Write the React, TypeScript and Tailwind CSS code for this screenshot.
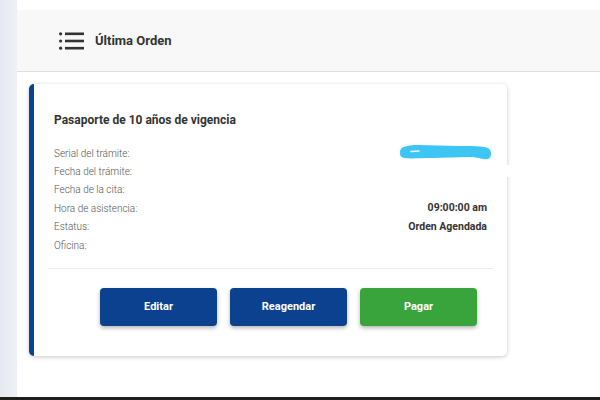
export default function App() {
  const rows = [
    { label: "Serial del trámite:", value: "" },
    { label: "Fecha del trámite:", value: "" },
    { label: "Fecha de la cita:", value: "" },
    { label: "Hora de asistencia:", value: "09:00:00 am" },
    { label: "Estatus:", value: "Orden Agendada" },
    { label: "Oficina:", value: "" },
  ];

  return (
    <div
      className="relative flex h-[400px] w-[600px] overflow-hidden bg-white"
      style={{ fontFamily: "Roboto, 'Liberation Sans', sans-serif" }}
    >
      {/* left strip */}
      <div className="w-[17px] shrink-0 bg-gradient-to-r from-[#e6e9f1] to-[#eef0f5]" />

      <div className="flex flex-1 flex-col">
        <div className="h-[10px] bg-white" />

        {/* Header */}
        <div className="flex h-[62px] items-center border-b border-[#dedede] bg-[#f8f8f8] pl-[42px]">
          <svg width="25" height="18" viewBox="0 0 25 18" className="text-[#333]">
            <circle cx="1.6" cy="1.8" r="1.6" fill="currentColor" />
            <circle cx="1.6" cy="9" r="1.6" fill="currentColor" />
            <circle cx="1.6" cy="16.2" r="1.6" fill="currentColor" />
            <rect x="6" y="0.5" width="19" height="2.6" fill="currentColor" />
            <rect x="6" y="7.7" width="19" height="2.6" fill="currentColor" />
            <rect x="6" y="14.9" width="19" height="2.6" fill="currentColor" />
          </svg>
          <span className="ml-[11px] text-[13px] font-bold text-[#333]">Última Orden</span>
        </div>

        {/* Card */}
        <div className="pl-3 pt-[12px]">
          <div className="w-[478px] h-[272px] rounded-[5px] border-l-[5px] border-[#0b418f] bg-white shadow-[0_1px_4px_rgba(0,0,0,0.22)]">
            <div className="px-[14px] pt-[28px]">
              <div className="px-[6px]">
                <h3 className="text-[12px] font-bold leading-[16px] text-[#333]">
                  Pasaporte de 10 años de vigencia
                </h3>
                <div className="mt-[16px] flex flex-col">
                  {rows.map((r, i) => (
                    <div key={i} className="flex h-[18.4px] items-center justify-between">
                      <span className="text-[10px] font-light text-[#555]">{r.label}</span>
                      {i === 0 ? (
                        <svg width="94" height="22" viewBox="0 0 94 22" className="-mr-[5px] h-[22px] w-[94px] shrink-0">
                          <path
                            d="M2 10 C 2 5, 8 3, 20 3 C 34 3, 46 4, 60 4 C 72 4, 84 4, 90 6 C 94 8, 94 16, 90 17 C 84 18, 80 15, 72 15 C 60 15, 46 16, 34 16 C 22 16, 12 17, 6 16 C 2 15, 2 13, 2 10 Z"
                            fill="#3dc6f4"
                          />
                          <path d="M13 9.5 L 21 9" stroke="#e9f8fe" strokeWidth="1.6" strokeLinecap="round" />
                        </svg>
                      ) : (
                        <span className="text-[10.5px] font-bold text-[#333]">{r.value}</span>
                      )}
                    </div>
                  ))}
                </div>
              </div>
              <div className="mt-[14px] border-t border-[#ececec]" />
              <div className="flex gap-[13px] pl-[52px] pt-[19px]">
                <button className="h-[38px] w-[117px] rounded-[4px] bg-[#0b418f] text-[11px] font-bold text-white shadow-[0_2px_4px_rgba(0,0,0,0.3)]">
                  Editar
                </button>
                <button className="h-[38px] w-[117px] rounded-[4px] bg-[#0b418f] text-[11px] font-bold text-white shadow-[0_2px_4px_rgba(0,0,0,0.3)]">
                  Reagendar
                </button>
                <button className="h-[38px] w-[117px] rounded-[4px] bg-[#38a43b] text-[11px] font-bold text-white shadow-[0_2px_4px_rgba(0,0,0,0.3)]">
                  Pagar
                </button>
              </div>
            </div>
          </div>
        </div>
      </div>

      {/* redaction patch over card edge */}
      <div className="absolute left-[400px] top-[165px] h-[12px] w-[115px] bg-white" />

      {/* bottom dark line */}
      <div className="absolute bottom-0 left-0 h-[3px] w-full bg-[#1e1e1e]" />
    </div>
  );
}
